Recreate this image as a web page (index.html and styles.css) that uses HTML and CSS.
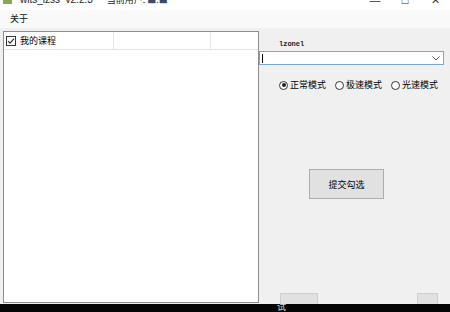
FILE: index.html
```html
<!DOCTYPE html>
<html>
<head>
<meta charset="utf-8">
<link rel="stylesheet" href="styles.css">
</head>
<body>
<div class="window">
  <div class="titlebar">
    <span class="app-icon"></span>
    <span class="title">wits_lzss&nbsp; v2.2.3</span>
    <span class="user">当前用户: <span class="blur">■.■</span></span>
    <span class="spacer"></span>
    <span class="ctl min">—</span>
    <span class="ctl max">□</span>
    <span class="ctl close">✕</span>
  </div>
  <div class="menubar"><span class="menu-item">关于</span></div>
  <div class="main">
    <div class="listview">
      <div class="lv-header">
        <div class="col col1"><span class="check"><svg width="10" height="10" viewBox="0 0 10 10"><rect x="0.5" y="0.5" width="9" height="9" fill="#fff" stroke="#333"/><path d="M2 5 L4 7.2 L8 2.6" fill="none" stroke="#222" stroke-width="1.1"/></svg></span><span class="col-text">我的课程</span></div>
        <div class="col col2"></div>
        <div class="col col3"></div>
      </div>
    </div>
    <div class="side">
      <div class="label">lzonel</div>
      <div class="combo">
        <span class="caret"></span>
        <svg class="arrow" width="8" height="5" viewBox="0 0 8 5"><path d="M0.5 0.5 L4 4 L7.5 0.5" fill="none" stroke="#555" stroke-width="1"/></svg>
      </div>
      <div class="radios">
        <label class="radio"><span class="dot on"></span><span class="rtext">正常模式</span></label>
        <label class="radio"><span class="dot"></span><span class="rtext">极速模式</span></label>
        <label class="radio"><span class="dot"></span><span class="rtext">光速模式</span></label>
      </div>
      <div class="submit">提交勾选</div>
      <div class="bottom-btns">
        <div class="bb bb1"></div>
        <div class="bb bb2"></div>
      </div>
    </div>
  </div>
  <div class="taskbar"><span class="tb-text">试</span></div>
</div>
</body>
</html>
```
FILE: styles.css
```css
html, body {
  margin: 0;
  padding: 0;
}
body {
  width: 450px;
  height: 312px;
  overflow: hidden;
  background: #f0f0f0;
  font-family: "Noto Sans CJK SC", "Liberation Sans", sans-serif;
  font-size: 9px;
  color: #000;
}
.window {
  display: flex;
  flex-direction: column;
  width: 450px;
  height: 312px;
}
.titlebar {
  height: 10px;
  background: #fff;
  display: flex;
  align-items: flex-start;
  overflow: hidden;
  font-family: "Liberation Sans", "Noto Sans CJK SC", sans-serif;
  font-size: 10px;
  line-height: 12px;
  color: #222;
  white-space: nowrap;
}
.titlebar > * {
  margin-top: -6px;
}
.app-icon {
  width: 9px;
  height: 10px;
  margin-left: 3px;
  background: #8aa55a;
}
.title {
  margin-left: 8px;
}
.user {
  margin-left: 14px;
  font-family: "Noto Sans CJK SC", sans-serif;
  font-size: 9px;
}
.blur {
  color: #3a4a6a;
}
.spacer {
  flex: 1;
}
.ctl {
  width: 30px;
  text-align: center;
  color: #333;
  font-size: 11px;
}
.menubar {
  height: 18px;
  background: #f9f9f9;
  display: flex;
  align-items: center;
  border-bottom: 1px solid #f2f2f2;
}
.menu-item {
  margin-left: 10px;
  font-size: 9px;
  line-height: 12px;
  color: #111;
}
.main {
  flex: 1;
  display: flex;
  overflow: hidden;
}
.listview {
  margin: 2px 0 1px 3px;
  width: 254px;
  background: #fff;
  border: 1px solid #8c8c8c;
}
.lv-header {
  display: flex;
  height: 17px;
  border-bottom: 1px solid #e5e5e5;
}
.col {
  display: flex;
  align-items: center;
  border-right: 1px solid #e5e5e5;
}
.col1 {
  width: 107px;
  padding-left: 2px;
}
.col2 {
  width: 96px;
}
.col3 {
  flex: 1;
  border-right: none;
}
.check {
  display: flex;
  width: 10px;
  height: 10px;
}
.col-text {
  margin-left: 4px;
  font-size: 9px;
  line-height: 12px;
  white-space: nowrap;
}
.side {
  flex: 1;
  display: flex;
  flex-direction: column;
}
.label {
  margin: 10px 0 0 20px;
  font-family: "Liberation Mono", monospace;
  font-weight: bold;
  font-size: 7px;
  line-height: 11px;
  color: #222;
}
.combo {
  margin: 1px 0 0 0;
  width: 183px;
  height: 12px;
  background: #fff;
  border: 1px solid #7aa7d6;
  display: flex;
  align-items: center;
  justify-content: space-between;
}
.caret {
  width: 1px;
  height: 9px;
  background: #000;
  margin-left: 2px;
}
.arrow {
  margin-right: 3px;
}
.radios {
  display: flex;
  margin: 14px 0 0 20px;
  height: 12px;
  align-items: center;
  white-space: nowrap;
}
.radio {
  display: flex;
  align-items: center;
  flex-shrink: 0;
  margin-right: 9px;
  font-size: 9px;
  line-height: 12px;
}
.rtext {
  margin-left: 2px;
}
.dot {
  box-sizing: border-box;
  width: 9px;
  height: 9px;
  border: 1px solid #333;
  border-radius: 50%;
  background: #fff;
  display: flex;
  align-items: center;
  justify-content: center;
}
.dot.on::after {
  content: "";
  width: 4px;
  height: 4px;
  border-radius: 50%;
  background: #222;
}
.submit {
  box-sizing: border-box;
  margin: 78px 0 0 50px;
  width: 75px;
  height: 30px;
  background: #e1e1e1;
  border: 1px solid #adadad;
  display: flex;
  align-items: center;
  justify-content: center;
  font-size: 9px;
}
.bottom-btns {
  margin-top: auto;
  display: flex;
  height: 11px;
  align-items: flex-end;
}
.bb {
  box-sizing: border-box;
  height: 11px;
  background: #e1e1e1;
  border: 1px solid #cfcfcf;
  border-bottom: none;
}
.bb1 {
  margin-left: 21px;
  width: 38px;
}
.bb2 {
  margin-left: 99px;
  width: 21px;
}
.taskbar {
  height: 8px;
  background: #050505;
  display: flex;
  align-items: flex-start;
  overflow: hidden;
}
.tb-text {
  margin-left: 277px;
  margin-top: -3px;
  color: #ddd;
  font-size: 9px;
  line-height: 11px;
}
```
